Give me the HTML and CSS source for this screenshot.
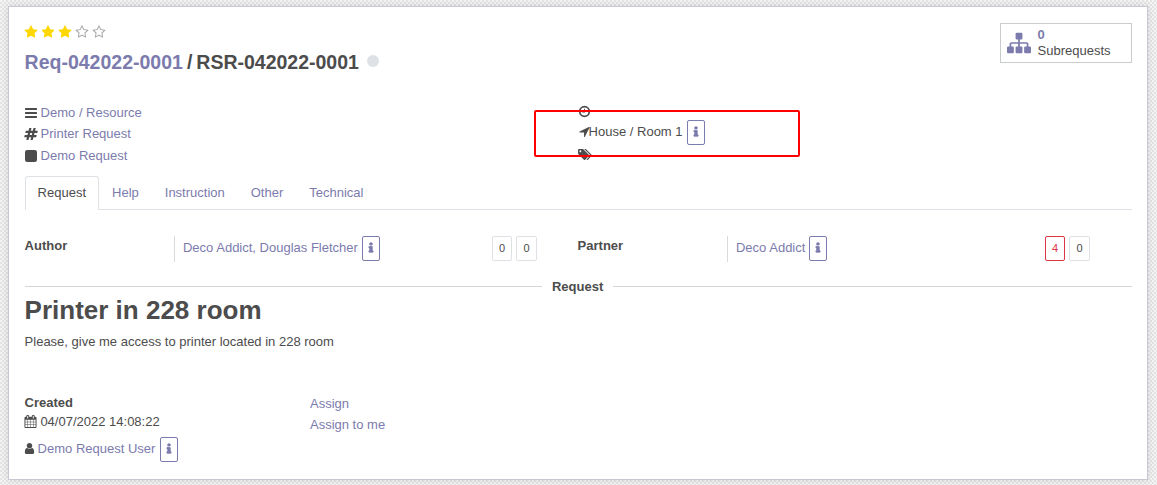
FILE: index.html
```html
<!DOCTYPE html>
<html lang="en">
<head>
<meta charset="utf-8">
<title>RSR-042022-0001</title>
<link rel="stylesheet" href="styles.css">
</head>
<body>
<svg class="sprite" width="0" height="0">
  <symbol id="star" viewBox="0 0 1792 1792"><path d="M1728 647q0 22-26 48l-363 354 86 500q1 7 1 20 0 21-10.5 35.5t-30.5 14.5q-19 0-40-12l-449-236-449 236q-22 12-40 12-21 0-31.5-14.5t-10.5-35.5q0-6 2-20l86-500-364-354q-25-27-25-48 0-37 56-46l502-73 225-455q19-41 49-41t49 41l225 455 502 73q56 9 56 46z"/></symbol>
  <symbol id="star-o" viewBox="0 0 1792 1792"><path d="M1201 1004l306-297-422-62-189-382-189 382-422 62 306 297-73 421 378-199 377 199zm527-357q0 22-26 48l-363 354 86 500q1 7 1 20 0 50-41 50-19 0-40-12l-449-236-449 236q-22 12-40 12-21 0-31.5-14.5t-10.5-35.5q0-6 2-20l86-500-364-354q-25-27-25-48 0-37 56-46l502-73 225-455q19-41 49-41t49 41l225 455 502 73q56 9 56 46z"/></symbol>
  <symbol id="user" viewBox="0 0 1792 1792"><path d="M1536 1399q0 109-62.500 187t-150.500 78h-854q-88 0-150.500-78t-62.500-187q0-85 8.500-160.500t31.500-152 58.500-131 94-89 134.500-34.500q131 128 313 128t313-128q76 0 134.500 34.500t94 89 58.500 131 31.500 152 8.500 160.500zm-256-887q0 159-112.500 271.500t-271.500 112.500-271.500-112.500-112.500-271.500 112.500-271.500 271.500-112.500 271.500 112.500 112.500 271.500z"/></symbol>
  <symbol id="calendar" viewBox="0 0 1792 1792"><path d="M192 1664h288v-288h-288v288zm352 0h320v-288h-320v288zm-352-352h288v-320h-288v320zm352 0h320v-320h-320v320zm-352-384h288v-288h-288v288zm736 736h320v-288h-320v288zm-384-736h320v-288h-320v288zm768 736h288v-288h-288v288zm-384-352h320v-320h-320v320zm-352-864v-288q0-13-9.500-22.500t-22.500-9.500h-64q-13 0-22.500 9.500t-9.500 22.500v288q0 13 9.500 22.500t22.500 9.500h64q13 0 22.500-9.500t9.500-22.500zm736 864h288v-320h-288v320zm-384-384h320v-288h-320v288zm384 0h288v-288h-288v288zm32-480v-288q0-13-9.500-22.500t-22.500-9.500h-64q-13 0-22.500 9.500t-9.500 22.500v288q0 13 9.500 22.500t22.500 9.500h64q13 0 22.500-9.500t9.500-22.500zm384-64v1280q0 52-38 90t-90 38h-1408q-52 0-90-38t-38-90v-1280q0-52 38-90t90-38h128v-96q0-66 47-113t113-47h64q66 0 113 47t47 113v96h384v-96q0-66 47-113t113-47h64q66 0 113 47t47 113v96h128q52 0 90 38t38 90z"/></symbol>
  <symbol id="sitemap" viewBox="0 0 1792 1792"><path d="M1792 1248v320q0 40-28 68t-68 28h-320q-40 0-68-28t-28-68v-320q0-40 28-68t68-28h96v-192h-512v192h96q40 0 68 28t28 68v320q0 40-28 68t-68 28h-320q-40 0-68-28t-28-68v-320q0-40 28-68t68-28h96v-192h-512v192h96q40 0 68 28t28 68v320q0 40-28 68t-68 28h-320q-40 0-68-28t-28-68v-320q0-40 28-68t68-28h96v-192q0-52 38-90t90-38h512v-192h-96q-40 0-68-28t-28-68v-320q0-40 28-68t68-28h320q40 0 68 28t28 68v320q0 40-28 68t-68 28h-96v192h512q52 0 90 38t38 90v192h96q40 0 68 28t28 68z"/></symbol>
  <symbol id="arrow" viewBox="0 0 1792 1792"><path d="M1593 349l-640 1280q-17 35-57 35-5 0-15-2-22-5-35.500-22.500t-13.500-39.500v-576h-576q-22 0-39.500-13.500t-22.500-35.500 4-42 29-30l1280-640q13-7 29-7 27 0 45 19 15 14 18.500 34.500t-6.500 39.500z"/></symbol>
  <symbol id="bars" viewBox="0 0 1792 1792"><rect x="128" y="256" width="1536" height="256" rx="64"/><rect x="128" y="768" width="1536" height="256" rx="64"/><rect x="128" y="1280" width="1536" height="256" rx="64"/></symbol>
  <symbol id="square" viewBox="0 0 1792 1792"><rect x="128" y="128" width="1536" height="1536" rx="288"/></symbol>
  <symbol id="hash" viewBox="0 0 1792 1792"><path d="M991 1024l64-256h-254l-64 256h254zm768-504l-56 224q-7 24-31 24h-327l-64 256h311q15 0 25 12 10 14 6 28l-56 224q-5 24-31 24h-327l-81 328q-7 24-31 24h-224q-16 0-26-12-9-12-6-28l78-312h-254l-81 328q-7 24-31 24h-225q-15 0-25-12-9-12-6-28l78-312h-311q-15 0-25-12-9-12-6-28l56-224q7-24 31-24h327l64-256h-311q-15 0-25-12-10-14-6-28l56-224q5-24 31-24h327l81-328q7-24 32-24h224q15 0 25 12 9 12 6 28l-78 312h254l81-328q7-24 32-24h224q15 0 25 12 9 12 6 28l-78 312h311q15 0 25 12 9 12 6 28z"/></symbol>
  <symbol id="tags" viewBox="0 0 1920 1792"><path d="M448 448q0-53-37.500-90.500t-90.500-37.500-90.500 37.500-37.500 90.500 37.500 90.500 90.500 37.500 90.500-37.500 37.500-90.500zm1067 576q0 53-37 90l-491 492q-39 37-91 37-53 0-90-37l-715-716q-38-37-64.500-101t-26.500-117v-416q0-52 38-90t90-38h416q53 0 117 26.500t102 64.500l715 714q37 39 37 91zm384 0q0 53-37 90l-491 492q-39 37-91 37-36 0-59-14t-53-45l470-470q37-37 37-90 0-52-37-91l-715-714q-38-38-102-64.500t-117-26.500h224q53 0 117 26.500t102 64.500l715 714q37 39 37 91z"/></symbol>
  <symbol id="clock" viewBox="0 0 1792 1792"><circle cx="896" cy="896" r="656" fill="none" stroke="currentColor" stroke-width="240"/><path d="M832 512h128v512h-384v-128h256z"/></symbol>
  <symbol id="info" viewBox="0 0 1792 1792"><path d="M1216 1344v128q0 26-19 45t-45 19h-512q-26 0-45-19t-19-45v-128q0-26 19-45t45-19h64v-384h-64q-26 0-45-19t-19-45v-128q0-26 19-45t45-19h384q26 0 45 19t19 45v576h64q26 0 45 19t19 45zm-128-1152v192q0 26-19 45t-45 19h-256q-26 0-45-19t-19-45v-192q0-26 19-45t45-19h256q26 0 45 19t19 45z"/></symbol>
</svg>

<main class="sheet">
  <header class="head">
    <div>
      <div class="stars">
        <svg class="icon"><use href="#star"/></svg>
        <svg class="icon"><use href="#star"/></svg>
        <svg class="icon"><use href="#star"/></svg>
        <svg class="icon off"><use href="#star-o"/></svg>
        <svg class="icon off"><use href="#star-o"/></svg>
      </div>
      <h1 class="title"><a>Req-042022-0001</a><span class="slash">/</span><span>RSR-042022-0001</span><i class="dot"></i></h1>
    </div>
    <div class="stat">
      <svg class="icon stat-icon"><use href="#sitemap"/></svg>
      <div class="stat-text"><b>0</b><span>Subrequests</span></div>
    </div>
  </header>

  <section class="meta">
    <div class="meta-left">
      <div class="meta-row"><svg class="icon"><use href="#bars"/></svg><a>Demo / Resource</a></div>
      <div class="meta-row"><svg class="icon"><use href="#hash"/></svg><a>Printer Request</a></div>
      <div class="meta-row"><svg class="icon"><use href="#square"/></svg><a>Demo Request</a></div>
    </div>
    <div class="meta-right">
      <svg class="icon"><use href="#clock"/></svg>
      <div class="location"><svg class="icon"><use href="#arrow"/></svg><span class="place">House / Room 1</span><span class="info"><svg class="icon"><use href="#info"/></svg></span></div>
      <svg class="icon tags"><use href="#tags"/></svg>
      <div class="highlight"></div>
    </div>
  </section>

  <nav class="tabs">
    <a class="tab active">Request</a>
    <a class="tab">Help</a>
    <a class="tab">Instruction</a>
    <a class="tab">Other</a>
    <a class="tab">Technical</a>
  </nav>

  <section class="people">
    <div class="person">
      <b class="label">Author</b>
      <div class="value"><a>Deco Addict, Douglas Fletcher</a><span class="info"><svg class="icon"><use href="#info"/></svg></span></div>
      <div class="counts"><span class="count">0</span><span class="count wide">0</span></div>
    </div>
    <div class="person">
      <b class="label">Partner</b>
      <div class="value"><a>Deco Addict</a><span class="info"><svg class="icon"><use href="#info"/></svg></span></div>
      <div class="counts"><span class="count red">4</span><span class="count wide">0</span></div>
    </div>
  </section>

  <div class="divider"><b>Request</b></div>
  <h2 class="subject">Printer in 228 room</h2>
  <p class="text">Please, give me access to printer located in 228 room</p>

  <footer class="foot">
    <div class="created">
      <b>Created</b>
      <div class="date"><svg class="icon"><use href="#calendar"/></svg><span>04/07/2022 14:08:22</span></div>
      <div class="by"><svg class="icon"><use href="#user"/></svg><a>Demo Request User</a><span class="info"><svg class="icon"><use href="#info"/></svg></span></div>
    </div>
    <div class="assign"><a>Assign</a><a>Assign to me</a></div>
  </footer>
</main>
</body>
</html>
```

FILE: styles.css
```css
* { box-sizing: border-box; }
body {
  margin: 0;
  height: 485px;
  padding: 6px 9px 5px 8px;
  overflow: hidden;
  font: 13px/20px "Liberation Sans", Arial, sans-serif;
  color: #4c4c4c;
  background: repeating-conic-gradient(#e4e4e4 0 25%, #f5f5f5 0 50%) 0 0 / 4px 4px;
}
a { color: #7c7bad; }
.sprite { display: block; }
.icon { display: block; flex: none; width: 13px; height: 13px; fill: currentColor; }

.sheet {
  height: 474px;
  padding: 16px 15px 0 15.6px;
  background: #fff;
  border: 1px solid #c8c8d3;
  box-shadow: 0 0 8px rgba(0, 0, 0, 0.12);
}

.head { display: flex; justify-content: space-between; height: 80px; }
.stars { display: flex; gap: 3px; margin: 2px 0 0 -1px; color: gold; }
.stars .icon { width: 14px; height: 14px; }
.stars .off { color: #a8a8a8; }
.title {
  display: flex;
  align-items: center;
  height: 24px;
  margin: 11px 0 0;
  font-size: 19.5px;
  line-height: 24px;
  white-space: nowrap;
}
.slash { margin: 0 4px; }
.dot { width: 12px; height: 12px; margin: -2px 0 0 8px; border-radius: 50%; background: #dee2e6; }
.stat { display: flex; width: 132px; height: 40px; padding: 3px 6px; border: 1px solid #c9cccc; }
.stat-icon { width: 24px; height: 24px; margin-top: 4px; color: #7c7bad; }
.stat-text { display: flex; flex-direction: column; margin-left: 6.5px; line-height: 16px; }
.stat-text b { color: #7c7bad; }

.meta { display: grid; grid-template-columns: 553px 1fr; height: 73px; }
.meta-left { margin-top: -1px; }
.meta-row { display: flex; align-items: center; gap: 2.5px; height: 21.5px; }
.meta-row .icon { width: 14px; height: 14px; margin-left: -0.5px; }
.meta-right { position: relative; padding-top: 2px; }
.location { display: flex; align-items: center; height: 27px; margin-top: 1px; }
.location > .icon { margin: -2px -2px 0 0; }
.place { margin-top: -2px; }
.tags { width: 14px; margin-top: 2px; }
.highlight {
  position: absolute;
  left: -43.6px;
  top: 7px;
  width: 266px;
  height: 47px;
  border: 2px solid #f00;
  border-radius: 2px;
}
.info {
  display: flex;
  align-items: center;
  justify-content: center;
  width: 18px;
  height: 25px;
  margin-left: 4.4px;
  border: 1px solid #7c7bad;
  border-radius: 2px;
  color: #7c7bad;
}
.info .icon { width: 12px; height: 12px; margin: -1px 0 0; stroke: currentColor; stroke-width: 110; }

.tabs { display: flex; height: 34px; border-bottom: 1px solid #dee2e6; }
.tab { height: 34px; padding: 7px 13px 0; }
.tab.active {
  padding: 6px 12px 0;
  color: #4c4c4c;
  background: #fff;
  border: 1px solid #dee2e6;
  border-bottom: 0;
  border-radius: 3px 3px 0 0;
}

.people { display: grid; grid-template-columns: 553px 1fr; padding-top: 26px; height: 66px; }
.person { display: flex; height: 26px; }
.label { width: 149.4px; }
.value { display: flex; width: 318px; padding-left: 8px; border-left: 1px solid #d8dadd; line-height: 24px; }
.value .info { margin-left: 4px; }
.counts { display: flex; gap: 4px; }
.count {
  width: 20px;
  height: 25px;
  border: 1px solid #dee2e6;
  border-radius: 2px;
  font-size: 11px;
  line-height: 23px;
  text-align: center;
}
.count.wide { width: 21px; }
.count.red { color: #dc3545; border-color: #dc3545; }

.divider { display: flex; align-items: center; gap: 10px; height: 20px; }
.divider b { position: relative; top: 1px; }
.divider::before, .divider::after { content: ""; flex: 1 1 0; height: 1px; background: #d5d5d8; }
.divider::before { flex: 0 0 517.4px; }
.subject { margin: -1px 0 0; font-size: 26px; line-height: 30px; }
.text { margin: 7px 0 0; }

.foot { display: flex; margin-top: 41px; }
.created { width: 285.4px; }
.created b { display: block; }
.date { display: flex; align-items: center; gap: 3.4px; height: 18px; margin-left: -0.6px; }
.date .icon { margin-top: -2px; }
.by { display: flex; align-items: center; height: 25px; margin-top: 6px; margin-left: -2px; }
.by > .icon { margin-top: -2px; }
.by > a { margin: -2px 0 0 2px; }
.assign { display: flex; flex-direction: column; gap: 1px; padding-top: 1px; }
```
